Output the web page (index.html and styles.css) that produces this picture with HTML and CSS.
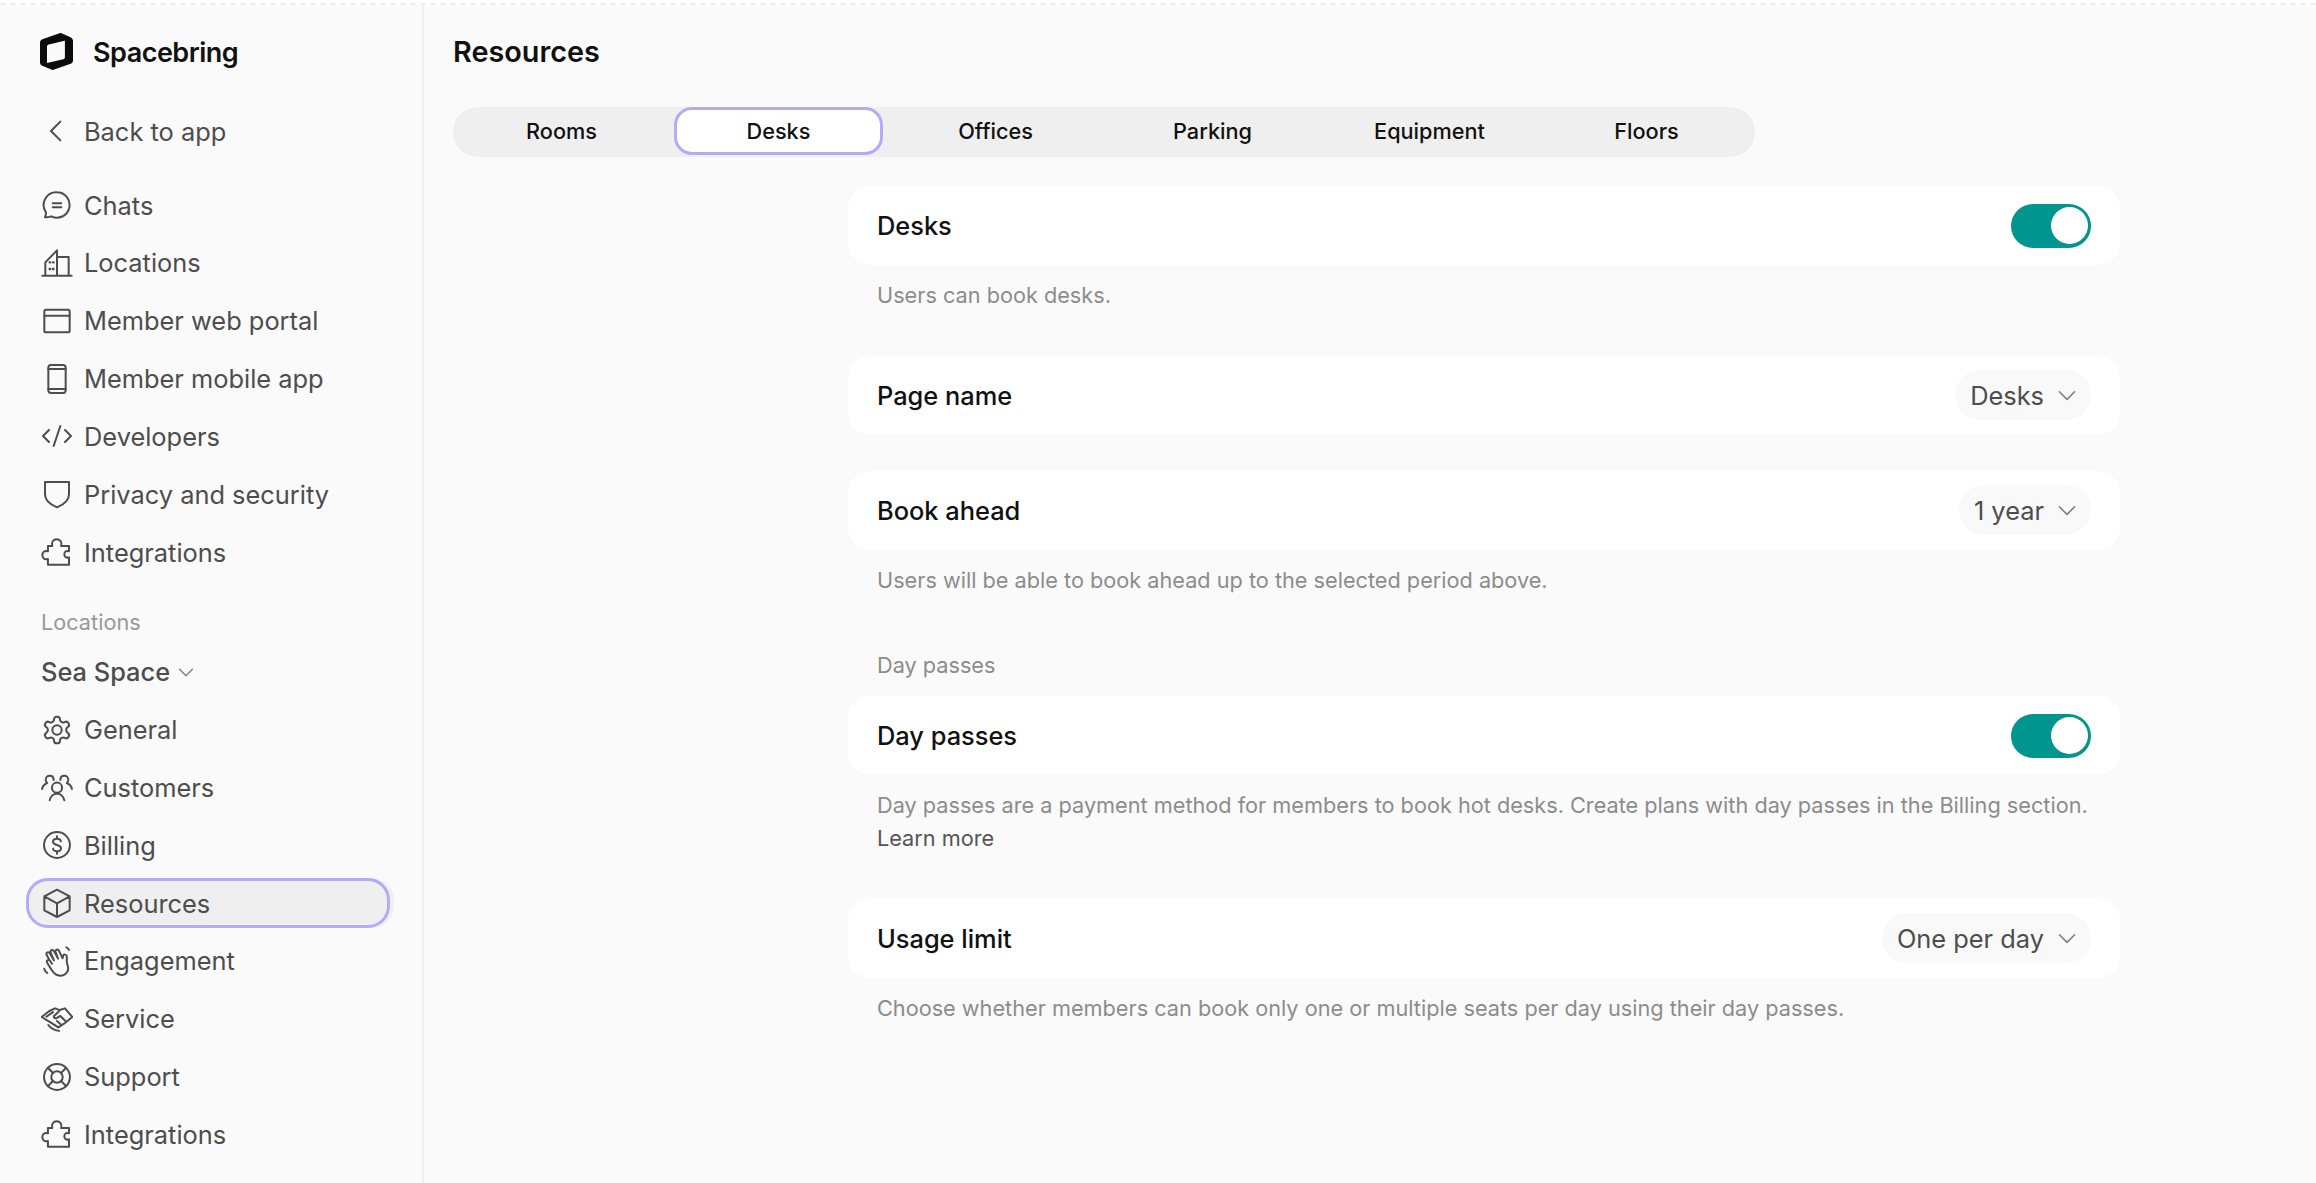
FILE: index.html
```html
<!DOCTYPE html>
<html lang="en">
<head>
  <meta charset="UTF-8">
  <title>Resources</title>
  <link rel="stylesheet" href="styles.css">
</head>
<body>
  <div class="top-strip"></div>
  <div class="app">
    <!-- Sidebar -->
    <aside class="sidebar">
      <div class="brand">
        <svg class="logo" viewBox="0 0 33 37"><path fill="#0b0b0b" fill-rule="evenodd" d="M21.5.3 30.5 4.200C32 4.900 33 6.300 33 8V27.500C33 29 32.200 30.300 30.700 30.800L13.500 36.700C12.800 37 12 37 11.300 36.600L2.300 32.800C.9 32.200 0 30.800 0 29.200V9.600C0 8 1 6.700 2.400 6.200L19.500.3C20.200 0 20.900 0 21.500.3ZM23.500 8 8.800 11.500C7.800 11.700 7 12.500 7 13.500V30L23.300 26.200C24.300 26 24.900 25.200 24.900 24.200V7.700Z"/></svg>
        <span class="brand-name">Spacebring</span>
      </div>

      <a class="nav-item back">
        <svg class="icon" viewBox="0 0 24 24"><path d="M14.500 5 7.500 12l7 7"/></svg>
        Back to app
      </a>

      <nav class="nav-group">
        <a class="nav-item">
          <svg class="icon" viewBox="0 0 24 24"><path d="M12 2.500a9.500 9.500 0 1 1-4.300 18c-1.600.6-3.200.8-4.700.7.500-1.100.8-2.400.7-3.800A9.500 9.500 0 0 1 12 2.500Z"/><path d="M8.800 10.600h6.400M8.800 13.600h6.400"/></svg>
          Chats
        </a>
        <a class="nav-item">
          <svg class="icon" viewBox="0 0 24 24"><path d="M1 21.500h22M3.250 21.500V11.500L12 2.500v19M12 7.500h8.750v14"/><path d="M6.500 11.500h.4M9 11.500h.4M6.500 16.500h.4M9 16.500h.4" stroke-width="1.800"/></svg>
          Locations
        </a>
        <a class="nav-item">
          <svg class="icon" viewBox="0 0 24 24"><rect x="2.500" y="3.500" width="19" height="17" rx="1.200"/><path d="M2.500 8h19"/></svg>
          Member web portal
        </a>
        <a class="nav-item">
          <svg class="icon" viewBox="0 0 24 24"><rect x="5.500" y="1.500" width="13" height="21" rx="2"/><path d="M5.500 4.500h13M5.500 19.500h13"/></svg>
          Member mobile app
        </a>
        <a class="nav-item">
          <svg class="icon" viewBox="0 0 24 24"><path d="M6 7.500 1.500 12 6 16.500M18 7.500 22.500 12 18 16.500M14.500 4.500l-5 15"/></svg>
          Developers
        </a>
        <a class="nav-item">
          <svg class="icon" viewBox="0 0 24 24"><path d="M3 3h18v9.200c0 4.800-3.800 7.700-9 9.800-5.200-2.100-9-5-9-9.800Z"/></svg>
          Privacy and security
        </a>
        <a class="nav-item">
          <svg class="icon" viewBox="0 0 24 24"><path d="M8.500 7.500c-1-2.800.8-5 3.300-5s4.300 2.200 3.300 5H21v4c-2.300-.8-3.500.3-3.500 2.200s1.300 3 3.500 2.300v5.500H5.200v-4.300c-2.700.9-4.200-.9-4.200-2.900s1.600-3.700 4.200-2.800V7.500Z"/></svg>
          Integrations
        </a>
      </nav>

      <div class="section-label">Locations</div>
      <div class="location-name">
        Sea Space
        <svg class="chevron small" viewBox="0 0 24 24"><path d="M5 9l7 7 7-7"/></svg>
      </div>

      <nav class="nav-group">
        <a class="nav-item">
          <svg class="icon" viewBox="0 0 24 24"><path d="M12.220 2h-.44a2 2 0 0 0-2 2v.18a2 2 0 0 1-1 1.730l-.43.250a2 2 0 0 1-2 0l-.15-.08a2 2 0 0 0-2.730.730l-.22.380a2 2 0 0 0 .730 2.730l.15.100a2 2 0 0 1 1 1.720v.510a2 2 0 0 1-1 1.740l-.15.090a2 2 0 0 0-.730 2.730l.22.380a2 2 0 0 0 2.730.730l.15-.08a2 2 0 0 1 2 0l.43.250a2 2 0 0 1 1 1.730V20a2 2 0 0 0 2 2h.44a2 2 0 0 0 2-2v-.18a2 2 0 0 1 1-1.730l.43-.250a2 2 0 0 1 2 0l.15.08a2 2 0 0 0 2.730-.730l.22-.39a2 2 0 0 0-.730-2.730l-.15-.08a2 2 0 0 1-1-1.740v-.5a2 2 0 0 1 1-1.740l.15-.09a2 2 0 0 0 .730-2.730l-.22-.38a2 2 0 0 0-2.730-.730l-.15.08a2 2 0 0 1-2 0l-.43-.25a2 2 0 0 1-1-1.730V4a2 2 0 0 0-2-2Z"/><circle cx="12" cy="12" r="3.500"/></svg>
          General
        </a>
        <a class="nav-item">
          <svg class="icon" viewBox="0 0 24 24"><circle cx="12" cy="12.500" r="3.800"/><path d="M6.500 22c.6-3 2.900-5 5.500-5s4.900 2 5.500 5M9.500 6.800c0-2-1.300-3.300-3-3.300s-3 1.300-3 3.100c0 1 .4 1.800 1.100 2.400C2.700 9.800 1.200 11.500.8 13.500M14.500 6.800c0-2 1.300-3.300 3-3.300s3 1.300 3 3.100c0 1-.4 1.800-1.100 2.400 1.900.8 3.400 2.500 3.800 4.500"/></svg>
          Customers
        </a>
        <a class="nav-item">
          <svg class="icon" viewBox="0 0 24 24"><circle cx="12" cy="12" r="9.700"/><path d="M15 9.300c-.3-1.300-1.500-2-3-2-1.800 0-3 1-3 2.300 0 3.200 6 1.600 6 4.800 0 1.300-1.200 2.300-3 2.300-1.500 0-2.700-.7-3-2M12 5.500v1.800M12 16.700v1.800"/></svg>
          Billing
        </a>
        <a class="nav-item active">
          <svg class="icon" viewBox="0 0 24 24"><path d="M12 2 21.500 7v10.500L12 22.500 2.500 17.500V7ZM2.500 7 12 12.300 21.500 7M12 12.300v10.200"/></svg>
          Resources
        </a>
        <a class="nav-item">
          <svg class="icon" viewBox="0 0 24 24"><path d="M6.200 11 4.300 7.500c-.9-1.700 1.300-2.900 2.300-1.300L9.700 11.500 7.300 5.800c-.8-1.800 1.500-2.800 2.400-1.200l3.100 5.600-1.800-4.900c-.6-1.800 1.700-2.600 2.500-1l2.700 5.700.3-1.600c.5-1.900 3-1.400 2.900.5-.2 2.300-.2 4.500.6 6.500 1.300 3.700-1 7.300-5 7.600-3.300.2-5.100-1.100-6.700-3.800L4.600 13.300c-1-1.800 1.300-3 2.300-1.300l1.300 2.100"/><path d="M19 1.800c.9.300 1.600 1 2 1.900M2.400 17.800c.4 1.300 1.200 2.400 2.300 3.200"/></svg>
          Engagement
        </a>
        <a class="nav-item">
          <svg class="icon" viewBox="0 0 24 24"><path d="M.5 10.500 6 6.200l4.500-2.200 3.500 1.300 4-1.300 5.500 6.500-5.500 4.500-5 3.300-5-3.200Z"/><path d="M4 10.300 9 6.800M13.500 6.200 9.800 9.700c-.8 1 1 2.300 2.200 1.500l2.500-1.500 4 4M14.700 16 12 13.500M5.500 16.500c1.500 2.200 4.500 3.800 8 4.400"/></svg>
          Service
        </a>
        <a class="nav-item">
          <svg class="icon" viewBox="0 0 24 24"><circle cx="12" cy="12" r="9.700"/><circle cx="12" cy="12" r="4.300"/><path d="M5.100 5.100 9 9M15 15l3.900 3.900M18.900 5.100 15 9M9 15l-3.900 3.900"/></svg>
          Support
        </a>
        <a class="nav-item">
          <svg class="icon" viewBox="0 0 24 24"><path d="M8.500 7.500c-1-2.800.8-5 3.300-5s4.300 2.200 3.300 5H21v4c-2.300-.8-3.500.3-3.500 2.200s1.300 3 3.500 2.300v5.500H5.200v-4.300c-2.700.9-4.200-.9-4.200-2.900s1.600-3.700 4.200-2.800V7.500Z"/></svg>
          Integrations
        </a>
      </nav>
    </aside>

    <!-- Main Content -->
    <main class="main-content">
      <h1 class="page-title">Resources</h1>

      <div class="tabs">
        <button class="tab">Rooms</button>
        <button class="tab selected">Desks</button>
        <button class="tab">Offices</button>
        <button class="tab">Parking</button>
        <button class="tab">Equipment</button>
        <button class="tab">Floors</button>
      </div>

      <div class="settings">
        <section class="setting">
          <div class="card">
            <span class="card-label">Desks</span>
            <span class="toggle"></span>
          </div>
          <p class="hint">Users can book desks.</p>
        </section>

        <section class="setting">
          <div class="card">
            <span class="card-label">Page name</span>
            <button class="select">Desks <svg class="chevron" viewBox="0 0 24 24"><path d="M5 9l7 7 7-7"/></svg></button>
          </div>
        </section>

        <section class="setting">
          <div class="card">
            <span class="card-label">Book ahead</span>
            <button class="select">1 year <svg class="chevron" viewBox="0 0 24 24"><path d="M5 9l7 7 7-7"/></svg></button>
          </div>
          <p class="hint">Users will be able to book ahead up to the selected period above.</p>
        </section>

        <section class="setting">
          <h2 class="group-title">Day passes</h2>
          <div class="card">
            <span class="card-label">Day passes</span>
            <span class="toggle"></span>
          </div>
          <p class="hint">Day passes are a payment method for members to book hot desks. Create plans with day passes in the Billing section. <a class="hint-link">Learn more</a></p>
        </section>

        <section class="setting">
          <div class="card">
            <span class="card-label">Usage limit</span>
            <button class="select">One per day <svg class="chevron" viewBox="0 0 24 24"><path d="M5 9l7 7 7-7"/></svg></button>
          </div>
          <p class="hint">Choose whether members can book only one or multiple seats per day using their day passes.</p>
        </section>
      </div>
    </main>
  </div>
</body>
</html>
```

FILE: styles.css
```css
/* General Styles */
* {
  box-sizing: border-box;
}

body {
  margin: 0;
  height: 1183px;
  overflow: hidden;
  font-family: 'Inter', 'Liberation Sans', sans-serif;
  background: #fafafa;
  color: #4d4d4d;
}

.top-strip {
  height: 5px;
  background: #fff;
  border-bottom: 2px dashed #efefef;
}

.app {
  display: flex;
  height: 1178px;
}

/* Sidebar */
.sidebar {
  width: 424px;
  flex-shrink: 0;
  padding: 0 28px 0 26px;
  border-right: 2px solid #efefef;
}

.brand {
  display: flex;
  align-items: center;
  height: 37px;
  margin: 28px 0 0 14px;
}

.logo {
  width: 33px;
  height: 37px;
}

.brand-name {
  margin-left: 20px;
  padding-top: 2px;
  font-size: 27px;
  font-weight: 600;
  letter-spacing: -0.5px;
  color: #111;
}

.nav-item {
  position: relative;
  display: flex;
  align-items: center;
  gap: 11px;
  height: 50px;
  margin-bottom: 7.85px;
  padding-left: 15px;
  border-radius: 22px;
  font-size: 25.4px;
  color: #4d4d4d;
}

.back {
  margin-top: 36px;
  margin-bottom: 24px;
}

.nav-item.active {
  background: #efefef;
}

.nav-item.active::after {
  content: "";
  position: absolute;
  inset: 0 4px 0 0;
  border: 3px solid #b4abf6;
  border-radius: 22px;
}

.icon {
  width: 32px;
  height: 32px;
  flex-shrink: 0;
  fill: none;
  stroke: #4d4d4d;
  stroke-width: 1.5;
  stroke-linecap: round;
  stroke-linejoin: round;
}

.section-label {
  margin-top: 30px;
  padding-left: 15px;
  font-size: 21.7px;
  line-height: 30px;
  color: #999;
}

.location-name {
  display: flex;
  align-items: center;
  gap: 5px;
  height: 40px;
  margin: 14.5px 0 13px;
  padding-left: 15px;
  font-size: 25.4px;
  font-weight: 500;
  color: #4d4d4d;
}

.chevron {
  width: 26px;
  height: 26px;
  fill: none;
  stroke: #808080;
  stroke-width: 1.5;
  stroke-linecap: round;
  stroke-linejoin: round;
}

.chevron.small {
  width: 22px;
  height: 22px;
}

/* Main Content */
.main-content {
  flex: 1;
  padding: 0 29px;
}

.page-title {
  margin: 28px 0 0;
  font-size: 28.8px;
  line-height: 38px;
  font-weight: 600;
  color: #111;
}

.tabs {
  display: flex;
  width: 1302px;
  height: 50px;
  margin-top: 36px;
  background: #efefef;
  border-radius: 25px;
}

.tab {
  flex: 1;
  margin: 0;
  padding: 0 0 2px;
  border: none;
  background: transparent;
  font-family: inherit;
  font-size: 21.7px;
  font-weight: 500;
  color: #111;
}

.tab.selected {
  flex: none;
  width: 209px;
  margin: 0 4px;
  height: 48px;
  padding: 0;
  background: #fff;
  border: 3px solid #b4abf6;
  border-radius: 18px;
}

.settings {
  width: 1272px;
  margin: 29px 0 0 395px;
}

.setting {
  margin-bottom: 36px;
}

.card {
  display: flex;
  align-items: center;
  justify-content: space-between;
  height: 79px;
  padding: 0 29px;
  background: #fff;
  border-radius: 22px;
}

.card-label {
  font-size: 25.4px;
  font-weight: 500;
  color: #111;
}

.toggle {
  position: relative;
  width: 80px;
  height: 44px;
  background: #00958f;
  border-radius: 22px;
}

.toggle::after {
  content: "";
  position: absolute;
  top: 3.5px;
  right: 3.5px;
  width: 37px;
  height: 37px;
  background: #fff;
  border-radius: 50%;
}

.select {
  display: flex;
  align-items: center;
  gap: 10px;
  height: 50px;
  padding: 0 11px 0 15px;
  border: none;
  background: #f9f9f9;
  border-radius: 25px;
  font-family: inherit;
  font-size: 25.4px;
  color: #4d4d4d;
}

.hint {
  margin: 14px 29px 0;
  padding-bottom: 7.5px;
  font-size: 21.7px;
  line-height: 33px;
  color: #8c8c8c;
}

.hint-link {
  color: #555;
}

.group-title {
  margin: 0 29px 14px;
  padding-top: 9px;
  font-size: 21.7px;
  line-height: 33px;
  font-weight: 400;
  color: #8c8c8c;
}
```
